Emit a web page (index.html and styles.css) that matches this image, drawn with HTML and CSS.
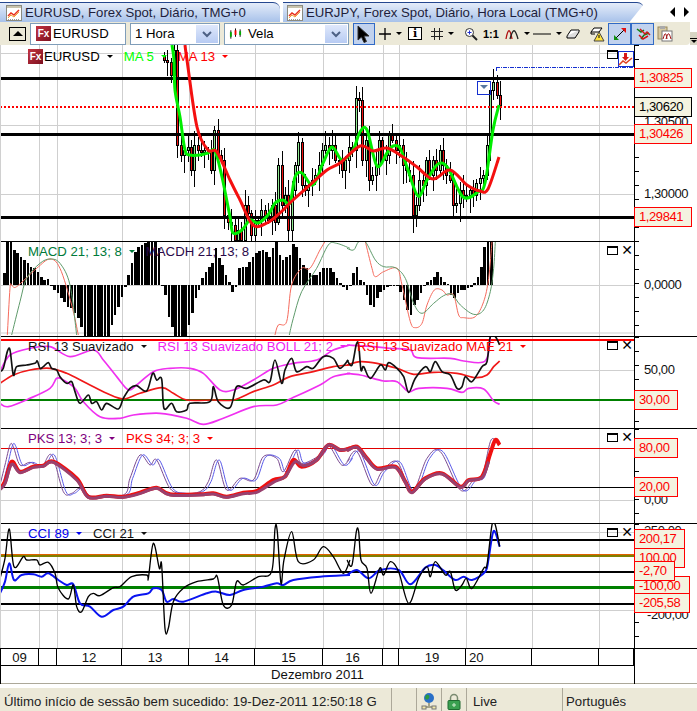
FILE: index.html
```html
<!DOCTYPE html>
<html lang="pt-br">
<head>
    <meta charset="UTF-8">
    <title>EURUSD, Forex Spot</title>
    <link rel="stylesheet" href="styles.css">
</head>
<body>

    <!-- Abas -->
    <div class="tabs">
        <div class="tab tab-first">
            <svg class="tab-icon" viewBox="0 0 16 16"><rect x=".5" y=".5" width="15" height="15" fill="#fff" stroke="#8a8a80"/><rect x="1" y="1" width="14" height="2" fill="#c9c4ae"/><path d="M2 11l3-3 3 2 5-5" fill="none" stroke="#e8301c" stroke-width="1.5"/><path d="M2 13l3-3 3 2 5-5" fill="none" stroke="#f0a030"/><path d="M2 14.500h12" stroke="#999" stroke-dasharray="1 1"/></svg>
            EURUSD, Forex Spot, Diário, TMG+0
        </div>
        <div class="tab tab-second">
            <svg class="tab-icon" viewBox="0 0 16 16"><rect x=".5" y=".5" width="15" height="15" fill="#fff" stroke="#8a8a80"/><rect x="1" y="1" width="14" height="2" fill="#c9c4ae"/><path d="M2 11l3-3 3 2 5-5" fill="none" stroke="#e8301c" stroke-width="1.5"/><path d="M2 13l3-3 3 2 5-5" fill="none" stroke="#f0a030"/><path d="M2 14.500h12" stroke="#999" stroke-dasharray="1 1"/></svg>
            EURJPY, Forex Spot, Diário, Hora Local (TMG+0)
        </div>
        <div class="tab-rest">
            <svg class="tab-icon" viewBox="0 0 16 16"><rect x=".5" y=".5" width="15" height="15" fill="#fff" stroke="#8a8a80"/><rect x="1" y="1" width="14" height="2" fill="#c9c4ae"/><path d="M2 11l3-3 3 2 5-5" fill="none" stroke="#e8301c" stroke-width="1.5"/><path d="M2 13l3-3 3 2 5-5" fill="none" stroke="#f0a030"/><path d="M2 14.500h12" stroke="#999" stroke-dasharray="1 1"/></svg>
        </div>
        <div class="tab-arrows"><i class="arrow-left"></i><i class="arrow-right"></i></div>
    </div>

    <!-- Barra de ferramentas -->
    <div class="toolbar-row">
    <div class="toolbar">
        <button class="collapse-btn"><i></i></button>
        <div class="combo combo-symbol"><span class="fx">Fx</span>EURUSD</div>
        <div class="combo combo-period">1 Hora<span class="combo-btn"><svg viewBox="0 0 10 8"><path d="M1 2l4 4 4-4" fill="none" stroke="#4d6185" stroke-width="2"/></svg></span></div>
        <div class="combo combo-type">
            <svg class="candle-icon" viewBox="0 0 14 12"><path d="M2 2v9M7 0v9M12 1v8" stroke="#000"/><rect x="1" y="4" width="2" height="5" fill="#0a0"/><rect x="6" y="2" width="2" height="5" fill="#e00"/><rect x="11" y="3" width="2" height="4" fill="#0a0"/></svg>
            Vela<span class="combo-btn"><svg viewBox="0 0 10 8"><path d="M1 2l4 4 4-4" fill="none" stroke="#4d6185" stroke-width="2"/></svg></span>
        </div>
        <div class="tools">
            <span class="tool on tool-pointer"><svg width="14" height="18" viewBox="0 0 14 18"><path d="M1 1v14l3.500-3 2.500 5.500 2.500-1-2.500-5.500H12z" fill="#000" stroke="#333"/></svg></span>
            <span class="tool tool-cross"><svg width="12" height="12" viewBox="0 0 12 12"><path d="M6 0v12M0 6h12" stroke="#000" stroke-width="1.300"/></svg><i class="caret"></i></span>
            <span class="tool tool-info">i</span>
            <span class="tool tool-grid"><svg width="12" height="12" viewBox="0 0 12 12"><path d="M3.500 0v12M8.500 0v12M0 3.500h12M0 8.500h12" stroke="#222"/></svg><i class="caret"></i></span>
            <span class="tool tool-zoom"><svg width="14" height="14" viewBox="0 0 14 14"><circle cx="5.500" cy="5.500" r="4" fill="#fff" stroke="#333"/><path d="M3.500 5.500h4M5.500 3.500v4" stroke="#2030d0"/><path d="M8.500 8.500l4.500 4.500" stroke="#222" stroke-width="2"/></svg></span>
            <span class="tool tool-ratio">1:1</span>
            <span class="tool tool-wave"><svg width="14" height="14" viewBox="0 0 14 14"><path d="M1 12C3 1 5 1 7 12" fill="none" stroke="#b01010" stroke-width="1.300"/><path d="M5 12C8 1 10 1 13 12" fill="none" stroke="#222" stroke-width="1.300"/></svg><i class="caret"></i></span>
            <span class="tool tool-line"><svg width="18" height="4" viewBox="0 0 18 4"><path d="M0 2h18" stroke="#000"/></svg><i class="caret"></i></span>
            <span class="tool tool-eraser"><svg width="14" height="12" viewBox="0 0 14 12"><path d="M1 8l4-6h8l-4 6z" fill="#fff" stroke="#000"/><path d="M1 8v2h8l4-6V2" fill="#ddd" stroke="#000"/></svg></span>
            <span class="tool tool-alert"><svg width="15" height="16" viewBox="0 0 15 16"><path d="M1 6l3-4h8l-3 4z" fill="#fff" stroke="#000"/><path d="M1 6v2h4" fill="none" stroke="#000"/><path d="M9 6l5 9H4z" fill="#ffe23c" stroke="#444"/><path d="M9 9v3" stroke="#000"/></svg></span>
            <span class="tool on tool-pair"><svg width="16" height="16" viewBox="0 0 16 16"><path d="M3 13L13 3" stroke="#000"/><path d="M9 2h5v5z" fill="#e01010"/><path d="M2 9v5h5z" fill="#109010"/></svg></span>
            <span class="tool on tool-pair"><svg width="16" height="16" viewBox="0 0 16 16"><path d="M2 3l4 3 3-2M6 13l3-4 5-2" fill="none" stroke="#108010" stroke-width="1.500"/><path d="M5 3l5 5 2-2 3 3M4 9l4 4 5-3" fill="none" stroke="#d01818" stroke-width="1.500"/></svg></span>
            <span class="tool tool-clip"><svg width="16" height="17" viewBox="0 0 16 17"><rect x="1" y="2" width="9" height="12" fill="#d8c9a0" stroke="#98885c"/><rect x="3" y="1" width="5" height="3" fill="#aaa"/><rect x="5" y="6" width="10" height="10" fill="#fff" stroke="#777"/><path d="M6 14c2-7 3-7 4 0M9 14c2-7 3-7 5 0" fill="none" stroke="#a01010"/></svg></span>
        </div>
    </div>
    <span class="toolbar-end"><i></i></span>
    </div>

    <!-- Painel de preço -->
    <div class="panel panel-price">
        <div class="plot">
            <svg width="634" height="196" viewBox="0 45 634 196">
                <path id="vgrid" class="grid" d="M39.500 45V648M57.500 45V648M122.500 45V648M189.500 45V648M255.500 45V648M323.500 45V648M383.500 45V648M399.500 45V648M466.500 45V648M532.500 45V648M599.500 45V648"/>
                <path class="grid" d="M0 53.500H634M0 125.500H634M0 194.500H634"/>
                <g id="candles"></g>
                <path class="level" d="M0 78.500H634M0 134.500H634M0 217.500H634"/>
                <path class="last-price" d="M0 107H634"/>
                <path class="target-line" d="M496.500 67V71M496 67.500H634"/>
                <polyline class="ma ma-fast" points="172,45 174,60 175,90 180,117 185,150 190,155 200,155 208,153 215,151 222,177 230,217 233,233 242,230 250,220 258,223 268,215 275,203 283,200 290,203 295,177 302,173 313,185 323,163 332,147 342,160 353,150 360,132 367,130 377,166 387,153 393,146 400,148 407,167 418,196 427,180 438,164 448,168 463,197 478,192 485,183 493,130 499,105"/>
                <polyline class="ma ma-slow" points="185,45 187,60 197,127 208,150 217,152 230,180 240,200 253,225 267,223 280,213 293,200 310,185 327,170 340,163 360,146 373,151 387,148 403,157 417,167 433,179 450,170 467,185 480,191 488,189 499,157"/>
                <rect class="marker" x="477.500" y="81.500" width="13" height="13"/>
                <path d="M480 85h8l-4 4z" fill="#5878a0"/>
            </svg>
            <div class="legend">
                <span class="fx">Fx</span>
                <span class="item item-symbol">EURUSD<i class="caret"></i></span>
                <span class="item lime">MA 5<i class="caret"></i></span>
                <span class="item red">MA 13<i class="caret"></i></span>
            </div>
            <span class="pane-max"></span>
            <svg class="pane-alert" viewBox="0 0 16 16"><rect x=".5" y=".5" width="15" height="15" fill="#fff" stroke="#1530d0"/><path d="M6 2h3v4h2l-3.500 4L4 6h2z" fill="#d81818"/><path d="M1 14l4-4 3 2 6-5" fill="none" stroke="#e04020" stroke-width="1.500"/></svg>
        </div>
        <div class="axis">
            <span class="price-label red-box">1,30825</span>
            <span class="axis-text axis-13050">1,30500</span>
            <span class="price-label black-box">1,30620</span>
            <span class="price-label red-box label-30426">1,30426</span>
            <span class="axis-text axis-13000">1,30000</span>
            <span class="price-label red-box label-29841">1,29841</span>
        </div>
    </div>

    <!-- MACD -->
    <div class="panel panel-macd">
        <div class="plot">
            <svg width="634" height="95" viewBox="0 241 634 95">
                <use href="#vgrid"/>
                <path class="grid" d="M0 285.500H634M0 333H634"/>
                <g id="macd-bars"></g>
                <g transform="translate(0 235) scale(.3333)">
                    <polyline class="macd-fast" points="22,300 30,160 35,150 50,155 110,100 150,72 180,100 215,210 235,300"/>
                    <polyline class="macd-fast" points="825,300 835,270 860,260 875,150 905,100 930,100 960,45 975,20"/>
                    <polyline class="macd-slow" points="35,300 60,200 80,130 120,85 150,72 180,85 210,150 230,300"/>
                    <polyline class="macd-slow" points="868,300 880,250 905,170 950,100 985,30 1010,25 1050,40"/>
                </g>
                <g transform="translate(347 235) scale(.3333)">
                    <polyline class="macd-fast" points="55,20 75,100 85,125 110,110 150,100 165,150 190,260 205,278 225,265 240,210 262,165 285,165 300,180 320,180 335,240 350,248 385,245 410,200 425,130 435,20"/>
                    <polyline class="macd-slow" points="0,40 20,45 35,20 55,20 85,75 110,95 145,98 175,130 200,205 225,235 260,205 290,182 315,178 340,210 380,238 410,225 430,170 440,100 445,20"/>
                </g>
                <path class="panel-top" d="M0 241.500H634"/>
            </svg>
            <div class="legend">
                <span class="item green">MACD 21; 13; 8<i class="caret"></i></span>
                <span class="item item-deep">MACDH 21; 13; 8</span>
            </div>
            <span class="pane-max"></span><span class="pane-close">✕</span>
        </div>
        <div class="axis"><span class="axis-text axis-macd">0,0000</span></div>
    </div>

    <!-- RSI -->
    <div class="panel panel-rsi">
        <div class="plot">
            <svg width="634" height="92" viewBox="0 336 634 92">
                <use href="#vgrid"/>
                <path class="grid" d="M0 370.500H634"/>
                <path class="rsi-top" d="M0 340H634"/>
                <path class="rsi-low" d="M0 400H634"/>
                <g transform="translate(0 235) scale(.3333)">
                    <polyline class="boll" points="0,410 30,360 90,340 150,335 210,365 280,345 310,375 350,425 385,465 410,450 460,410 510,400 570,400 610,415 660,465 700,465 760,435 820,400 880,385 950,375 1000,345 1050,330"/>
                    <polyline class="boll" points="0,505 25,515 90,490 150,460 170,430 190,435 225,460 250,500 300,545 360,550 400,540 480,535 560,550 610,568 670,550 760,515 830,510 875,490 960,450 1000,425 1050,415"/>
                    <polyline class="mae" points="0,445 40,420 90,405 150,400 200,415 260,445 320,475 370,492 420,475 485,458 520,475 560,495 640,495 700,495 760,470 820,450 870,425 940,410 1000,395 1050,390"/>
                    <polyline class="rsi" points="0,410 10,400 22,350 30,345 40,420 50,395 80,390 105,385 112,378 120,400 130,395 145,383 155,400 170,405 180,425 200,445 215,440 225,470 240,505 265,480 275,505 290,500 305,525 320,505 355,522 370,490 390,460 410,452 440,468 458,415 470,435 485,432 492,520 515,505 530,530 560,525 570,505 630,500 640,455 655,500 690,518 710,455 740,460 790,435 810,440 825,375 845,445 855,405 875,370 890,410 920,395 940,400 970,365 1000,370 1020,400 1045,375"/>
                </g>
                <g transform="translate(347 235) scale(.3333)">
                    <polyline class="boll" points="0,330 80,335 130,340 190,345 210,368 310,370 350,378 415,378 430,305"/>
                    <polyline class="boll" points="0,415 40,420 60,425 110,438 150,440 185,470 215,460 300,460 345,472 365,460 410,462 440,498 458,508"/>
                    <polyline class="mae" points="0,390 40,380 90,385 150,400 200,418 260,412 330,415 385,428 420,420 440,395 458,378"/>
                    <polyline class="rsi" points="0,375 15,390 28,328 35,330 42,405 50,395 70,430 100,390 115,405 125,383 150,400 170,425 185,472 205,430 235,395 250,410 265,380 285,410 310,420 330,460 345,455 355,425 375,440 405,395 420,380 430,305 445,305 458,330"/>
                </g>
                <path class="panel-top" d="M0 336.500H634"/>
            </svg>
            <div class="legend">
                <span class="item item-dark">RSI 13 Suavizado<i class="caret"></i></span>
                <span class="item magenta">RSI 13 Suavizado BOLL 21; 2<i class="caret"></i></span>
                <span class="item red">RSI 13 Suavizado MAE 21<i class="caret"></i></span>
            </div>
            <span class="pane-max"></span><span class="pane-close">✕</span>
        </div>
        <div class="axis axis-ruled">
            <span class="axis-text axis-50">50,00</span>
            <span class="price-label red-box label-30">30,00</span>
        </div>
    </div>

    <!-- PKS -->
    <div class="panel panel-pks">
        <div class="plot">
            <svg width="634" height="95" viewBox="0 428 634 95">
                <use href="#vgrid"/>
                <path class="grid" d="M0 500.500H634"/>
                <path class="pks-top" d="M0 448.500H634"/>
                <path class="pks-low" d="M0 487.500H634"/>
                <g transform="translate(0 425) scale(.3333)">
                    <polyline class="pks-thin-a" points="0,180 15,120 30,60 40,65 60,120 90,112 125,125 155,90 190,200 215,205 240,190 270,215 370,210 390,160 420,90 450,120 470,105 510,190 550,205 600,200 625,170 650,105 680,195 720,160 760,165 790,95 830,100 850,140 885,75 905,115 960,90 985,60 1025,120 1050,100"/>
                    <polyline class="pks-thin-b" points="8,180 23,120 38,60 48,65 68,120 98,112 133,125 163,90 198,200 223,205 248,190 278,215 378,210 398,160 428,90 458,120 478,105 518,190 558,205 608,200 633,170 658,105 688,195 728,160 768,165 798,95 838,100 858,140 893,75 913,115 968,90 993,60 1033,120 1058,100"/>
                    <polyline class="pks-red" points="0,190 15,170 35,110 60,140 100,125 130,122 160,110 230,160 265,215 320,212 370,215 420,203 470,188 510,208 600,208 640,205 680,215 730,203 770,198 820,165 855,155 880,105 905,125 950,105 985,60 1020,75 1050,70"/>
                    <polyline class="pks-purple" points="0,194 15,176 35,118 60,143 100,127 130,124 160,112 230,165 265,217 320,214 370,217 420,206 470,190 510,210 600,210 640,207 680,217 730,206 770,202 820,172 855,155 885,110 910,122 950,105 985,60 1020,75 1050,70"/>
                </g>
                <g transform="translate(347 425) scale(.3333)">
                    <polyline class="pks-thin-a" points="0,110 30,80 75,180 105,140 150,110 195,200 240,100 280,80 340,195 380,165 405,155 430,50 445,45"/>
                    <polyline class="pks-thin-b" points="8,110 38,80 83,180 113,140 158,110 203,200 248,100 288,80 348,195 388,165 413,155 438,60 448,48"/>
                    <polyline class="pks-red" points="0,75 30,65 60,100 90,130 145,125 175,170 195,200 235,160 285,145 340,185 365,165 405,155 430,85 445,45 458,60"/>
                    <polyline class="pks-purple" points="0,77 30,67 60,102 90,133 145,127 175,172 195,203 235,162 285,147 340,187 365,167 405,158 425,110"/>
                </g>
                <path class="panel-top" d="M0 428.500H634"/>
            </svg>
            <div class="legend">
                <span class="item purple">PKS 13; 3; 3<i class="caret"></i></span>
                <span class="item red">PKS 34; 3; 3<i class="caret"></i></span>
            </div>
            <span class="pane-max"></span><span class="pane-close">✕</span>
        </div>
        <div class="axis axis-ruled">
            <span class="axis-text axis-0">0,00</span>
            <span class="price-label red-box label-80">80,00</span>
            <span class="price-label red-box label-20">20,00</span>
        </div>
    </div>

    <!-- CCI -->
    <div class="panel panel-cci">
        <div class="plot">
            <svg width="634" height="125" viewBox="0 523 634 125">
                <use href="#vgrid"/>
                <path class="grid" d="M0 532.500H634M0 610.500H634"/>
                <path class="cci-line" d="M0 540H634M0 572H634M0 604H634"/>
                <path class="cci-orange" d="M0 554.500H634"/>
                <path class="cci-olive" d="M0 556H634"/>
                <path class="cci-green" d="M0 587.500H634"/>
                <g transform="translate(0 425) scale(.3333)">
                    <polyline class="cci-89" points="0,505 15,470 28,415 42,465 65,450 100,448 125,455 145,445 175,465 200,480 220,478 240,535 270,545 305,575 340,555 370,545 400,515 445,505 460,490 485,495 500,530 520,522 550,530 620,505 650,500 690,510 730,495 790,485 830,475 850,480 880,465 960,455 1050,450"/>
                    <polyline class="cci-21" points="0,460 15,400 28,312 42,425 70,395 80,405 110,405 120,420 145,412 165,445 175,490 205,522 220,480 230,545 245,560 265,515 280,505 300,512 340,488 360,485 395,455 440,450 445,460 460,355 478,430 485,420 495,610 505,610 520,530 550,490 590,470 640,462 652,455 670,540 695,540 710,470 730,480 775,455 815,440 825,312 832,320 843,475 852,405 875,320 895,410 940,405 970,365 1000,395 1030,445 1050,405"/>
                </g>
                <g transform="translate(347 425) scale(.3333)">
                    <polyline class="cci-89" points="0,450 30,435 65,460 100,435 155,435 190,478 235,428 265,420 290,437 325,465 350,455 375,465 415,440 425,400 440,318 458,365"/>
                    <polyline class="cci-21" points="0,405 15,420 28,320 35,320 42,405 60,430 72,505 98,430 110,450 130,410 155,440 185,535 215,460 240,425 250,455 265,410 295,450 310,440 325,495 345,480 358,460 375,490 410,430 420,420 435,300 445,300 458,365"/>
                </g>
                <path class="panel-top" d="M0 523.500H634"/>
            </svg>
            <div class="legend">
                <span class="item blue">CCI 89<i class="caret"></i></span>
                <span class="item item-dark">CCI 21<i class="caret"></i></span>
            </div>
            <span class="pane-max"></span><span class="pane-close">✕</span>
        </div>
        <div class="axis axis-ruled">
            <span class="axis-text axis-250">250,00</span>
            <span class="axis-text axis-m200">-200,00</span>
            <span class="price-label red-box label-100">100,00</span>
            <span class="price-label red-box label-200">200,17</span>
            <span class="price-label red-box label-m100">-100,00</span>
            <span class="price-label red-box label-m2">-2,70</span>
            <span class="price-label red-box label-m205">-205,58</span>
        </div>
    </div>

    <!-- Eixo de tempo -->
    <div class="time-axis">
        <div class="days">
            <span>09</span><span></span><span>12</span><span>13</span><span>14</span><span>15</span><span>16</span><span></span><span>19</span><span class="day-left">20</span><span></span><span></span>
        </div>
        <div class="month">Dezembro 2011</div>
    </div>

    <!-- Barra de status -->
    <div class="status">
        <span class="status-cell status-msg">Último início de sessão bem sucedido: 19-Dez-2011 12:50:18 G</span>
        <span class="status-cell status-icon"></span>
        <span class="status-cell status-icon"><svg width="16" height="18" viewBox="0 0 16 18"><circle cx="8" cy="6" r="5" fill="#2a70c8"/><path d="M5 3c3-1 4 1 3 3s-3 2-4 0" fill="#2c9a40"/><path d="M8 11v3M2 15h12" stroke="#8a8a70" stroke-width="1.500"/><rect x="1" y="14" width="4" height="3" fill="#f3e9a8" stroke="#777"/><rect x="11" y="14" width="4" height="3" fill="#f3e9a8" stroke="#777"/></svg></span>
        <span class="status-cell status-icon"><svg width="14" height="17" viewBox="0 0 14 17"><path d="M3.500 8V5a3.500 3.500 0 0 1 7 0v3" fill="none" stroke="#7a8a70" stroke-width="1.500"/><rect x="1" y="7.500" width="12" height="9" rx="1" fill="#3aa050" stroke="#1f6a30"/><path d="M7 10v4M5 12h4" stroke="#cfeccf"/></svg></span>
        <span class="status-cell status-live">Live</span>
        <span class="status-cell status-lang">Português</span>
    </div>

    <script src="chart.js"></script>
</body>
</html>
```

FILE: styles.css
```css
body, html {
    margin: 0;
    padding: 0;
    background: #fff;
    font-family: "Liberation Sans", Arial, sans-serif;
    font-size: 13.2px;
    overflow: hidden;
}

/* Abas */
.tabs {
    display: flex;
    height: 22px;
    padding-top: 2px;
    box-sizing: border-box;
    position: relative;
}

.tab {
    display: flex;
    align-items: center;
    gap: 3px;
    padding-left: 6px;
    color: #1e1e3c;
    background: linear-gradient(#e4ecf9, #a8c2ea);
    border-top: 1px solid #24478f;
    border-radius: 0 7px 0 0;
    box-sizing: border-box;
    white-space: nowrap;
}

.tab-first {
    width: 280px;
    margin-right: 3px;
}

.tab-second {
    width: 361px;
    padding-left: 4px;
    clip-path: polygon(0 0, 100% 0, 100% 10%, 96% 100%, 0 100%);
}

.tab-icon {
    width: 16px;
    height: 16px;
    flex: none;
}

.tab-rest {
    display: flex;
    align-items: center;
    width: 36px;
    margin-left: -14px;
    padding-left: 21px;
    box-sizing: border-box;
    background: #fbe6c8;
    position: relative;
    z-index: -1;
}

.tab-arrows {
    display: flex;
    align-items: center;
    gap: 9px;
    padding-left: 4px;
}

.arrow-left {
    border: 5px solid transparent;
    border-left-width: 0;
    border-right: 5px solid #000;
}

.arrow-right {
    border: 5px solid transparent;
    border-right-width: 0;
    border-left: 5px solid #000;
}

/* Barra de ferramentas */
.toolbar-row {
    display: flex;
    height: 23px;
}

.toolbar {
    display: flex;
    align-items: center;
    width: 690px;
    height: 23px;
    box-sizing: border-box;
    padding-left: 9px;
    background: #ece9d8;
    border-radius: 0 0 4px 0;
}

.toolbar-end {
    display: flex;
    flex-direction: column;
    align-items: center;
    justify-content: flex-end;
    gap: 1px;
    width: 7px;
    padding-bottom: 2px;
    box-sizing: border-box;
    background: linear-gradient(#fff 45%, #d8d5c4 45%);
}

.toolbar-end::before {
    content: "";
    width: 7px;
    height: 1px;
    background: #000;
}

.toolbar-end i {
    border: 3px solid transparent;
    border-top: 3px solid #000;
    border-bottom-width: 0;
}

.collapse-btn {
    width: 17px;
    height: 14px;
    margin-right: 4px;
    padding: 0;
    border: 1px solid #000;
    background: #ece9d8;
    display: flex;
    align-items: center;
    justify-content: center;
}

.collapse-btn i {
    border: 5px solid transparent;
    border-top-width: 0;
    border-bottom: 5px solid #000;
}

.combo {
    display: flex;
    align-items: center;
    height: 22px;
    margin-right: 4px;
    box-sizing: border-box;
    background: #fff;
    border: 1px solid #7f9db9;
    color: #000;
    position: relative;
}

.combo-symbol {
    width: 96px;
    padding-left: 5px;
}

.combo-symbol .fx {
    margin-right: 2px;
}

.combo-period {
    width: 90px;
    padding-left: 4px;
}

.combo-type {
    width: 125px;
    padding-left: 4px;
}

.combo-btn {
    position: absolute;
    right: 1px;
    top: 1px;
    bottom: 1px;
    width: 22px;
    display: flex;
    align-items: center;
    justify-content: center;
    background: linear-gradient(#dfe8fb, #b7cbf3);
}

.combo-btn svg {
    width: 10px;
    height: 8px;
}

.candle-icon {
    width: 13px;
    height: 12px;
    margin-right: 6px;
}

.fx {
    display: inline-block;
    width: 15px;
    height: 15px;
    flex: none;
    background: linear-gradient(135deg, #c43340, #7c1020);
    color: #fff;
    font-size: 10px;
    font-weight: bold;
    line-height: 15px;
    text-align: center;
}

.tools {
    display: flex;
    align-items: center;
    height: 22px;
}

.tool {
    display: flex;
    align-items: center;
    height: 22px;
    box-sizing: border-box;
    flex: none;
}

.tool.on {
    background: #c1d2ee;
    border: 1px solid #316ac5;
    justify-content: center;
}

.tool .caret {
    margin-left: 5px;
}

.tool-pointer { width: 22px; margin-right: 4px; }
.tool-cross { width: 29px; }
.tool-info {
    width: 14px;
    height: 13px;
    margin-right: 9px;
    border: 1.5px solid #000;
    justify-content: center;
    font-family: "DejaVu Serif", serif;
    font-size: 11px;
    font-weight: bold;
    background: #fff;
}
.tool-grid { width: 33px; }
.tool-zoom { width: 19px; }
.tool-ratio { width: 22px; font-size: 11px; font-weight: bold; }
.tool-wave { width: 28px; }
.tool-line { width: 33px; }
.tool-eraser { width: 24px; }
.tool-alert { width: 18px; }
.tool-pair { width: 23px; }
.tool-clip { width: 20px; padding-left: 3px; }

/* Painéis */
.panel {
    display: flex;
}

.panel-price { height: 196px; }
.panel-macd { height: 95px; }
.panel-rsi { height: 92px; }
.panel-pks { height: 95px; }
.panel-cci { height: 125px; }

.plot {
    position: relative;
    width: 634px;
    height: 100%;
    flex: none;
    overflow: hidden;
    border-left: 1px solid #d0d0d0;
    box-sizing: border-box;
}

.plot svg {
    display: block;
    margin-left: -1px;
    fill: none;
}

.axis {
    position: relative;
    flex: 1;
    box-sizing: border-box;
    border-left: 1px solid #000;
    background: repeating-linear-gradient(#000 0 1px, transparent 1px 14px) no-repeat 0 0 / 4px 100%;
    font-size: 13px;
    letter-spacing: -.4px;
}

.axis-ruled {
    border-top: 1px solid #000;
}

.grid { stroke: #cfcfcf; stroke-width: 1; }
.level { stroke: #000; stroke-width: 3; }
.last-price { stroke: #f00; stroke-width: 2; stroke-dasharray: 2 2; }
.target-line { stroke: #1530d0; stroke-dasharray: 4 1 1 1; }
.ma { stroke-width: 3; fill: none; stroke-linejoin: round; }
.ma-fast { stroke: #00ee00; }
.ma-slow { stroke: #f41010; }
.marker { stroke: #1530d0; stroke-width: 1; }
.panel-top { stroke: #000; stroke-width: 1; }

#candles, #macd-bars { shape-rendering: crispEdges; }

.macd-fast { stroke: #f56a5c; stroke-width: 3; fill: none; }
.macd-slow { stroke: #5e9a6a; stroke-width: 3; fill: none; }

.rsi-top { stroke: #f00; stroke-width: 2; }
.rsi-low { stroke: #008000; stroke-width: 2; }
.boll { stroke: #f030f0; stroke-width: 5; fill: none; }
.mae { stroke: #f01818; stroke-width: 5; fill: none; }
.rsi { stroke: #111; stroke-width: 5; fill: none; }

.pks-top { stroke: #e00000; stroke-width: 1; }
.pks-low { stroke: #000; stroke-width: 1; }
.pks-thin-a { stroke: #7a4a90; stroke-width: 3; fill: none; }
.pks-thin-b { stroke: #5a5ae8; stroke-width: 3; fill: none; }
.pks-red { stroke: #f01010; stroke-width: 12; fill: none; stroke-linejoin: round; }
.pks-purple { stroke: #99406e; stroke-width: 9; fill: none; stroke-linejoin: round; }

.cci-line { stroke: #000; stroke-width: 2; }
.cci-orange { stroke: #e06000; stroke-width: 1; }
.cci-olive { stroke: #808000; stroke-width: 2; }
.cci-green { stroke: #008000; stroke-width: 3; }
.cci-89 { stroke: #0a14f0; stroke-width: 6; fill: none; }
.cci-21 { stroke: #000; stroke-width: 4; fill: none; }

/* Legendas */
.legend {
    position: absolute;
    left: 27px;
    top: 2px;
    display: flex;
    align-items: center;
    white-space: nowrap;
    height: 16px;
}

.panel-price .legend { top: 3px; }

.item {
    display: flex;
    align-items: center;
    margin-right: 11px;
}

.item-symbol { color: #000; margin-left: 1px; }
.item-dark { color: #111; }
.item-deep { color: #2a0a4a; }
.lime { color: #00ff00; }
.green { color: #007a3a; }
.red { color: #f00; }
.magenta { color: #f020f0; }
.purple { color: #800080; }
.blue { color: #0000f0; }

.caret {
    display: inline-block;
    margin-left: 7px;
    border: 3px solid transparent;
    border-bottom-width: 0;
    border-top: 3px solid currentColor;
}

.pane-max {
    position: absolute;
    right: 16px;
    top: 5px;
    width: 9px;
    height: 6px;
    border: 1px solid #000;
    border-top-width: 2px;
}

.pane-close {
    position: absolute;
    right: 1px;
    top: 1px;
    font-size: 14px;
    line-height: 16px;
    font-weight: bold;
    font-family: "DejaVu Sans", sans-serif;
    color: #000;
}

.pane-alert {
    position: absolute;
    width: 16px;
    height: 16px;
    left: 618px;
    top: 6px;
}

/* Rótulos do eixo */
.axis-text {
    position: absolute;
    left: 9px;
    color: #111;
    line-height: 16px;
}

.price-label {
    position: absolute;
    left: -1px;
    height: 20px;
    box-sizing: border-box;
    padding: 0 4px;
    line-height: 18px;
    background: #f4f3e0;
    border: 1px solid #f00;
    white-space: nowrap;
    color: #f00;
}

.red-box { color: #f00; border-color: #f00; }
.black-box { color: #000; border-color: #000; }

.panel-price .price-label { width: 58px; }
.panel-price .red-box { top: 23px; }
.panel-price .black-box { top: 52px; }
.panel-price .label-30426 { top: 79px; }
.panel-price .label-29841 { top: 162px; }
.axis-13050 { top: 69px; }
.axis-13000 { top: 141px; }

.axis-macd { top: 36px; }
.axis-50 { top: 25px; }
.panel-rsi .label-30 { top: 53px; width: 44px; }

.panel-pks .label-80 { top: 9px; width: 44px; }
.panel-pks .label-20 { top: 48px; width: 44px; }
.axis-0 { top: 63px; }

.axis-250 { top: -1px; }
.axis-m200 { top: 83px; left: 12px; }
.panel-cci .label-200 { top: 5px; width: 51px; }
.panel-cci .label-100 { top: 24px; width: 51px; }
.panel-cci .label-m2 { top: 37px; width: 41px; }
.panel-cci .label-m100 { top: 52px; width: 56px; }
.panel-cci .label-m205 { top: 69px; width: 56px; }

/* Eixo de tempo */
.time-axis {
    position: relative;
    width: 635px;
    border-right: 1px solid #000;
    box-sizing: border-box;
    border-left: 1px solid #000;
}

.time-axis::before {
    content: "";
    position: absolute;
    left: 0;
    top: 0;
    width: 697px;
    height: 1px;
    background: #000;
}

.days {
    display: grid;
    grid-template-columns: 38px 18px 65px 67px 66px 68px 60px 16px 67px 66px 67px 35px;
    height: 18px;
    box-sizing: border-box;
    border-top: 1px solid #000;
    border-bottom: 1px solid #000;
}

.days span {
    border-right: 1px solid #000;
    text-align: center;
    line-height: 17px;
    color: #111;
}

.days .day-left {
    text-align: left;
    padding-left: 3px;
}

.month {
    height: 18px;
    line-height: 18px;
    text-align: center;
    color: #111;
}

/* Barra de status */
.status {
    display: flex;
    height: 23px;
    margin-top: 4px;
    background: #ece9d8;
    box-shadow: 0 -4px 0 0 #fff, 0 -5px 0 0 #aca899;
    color: #222;
}

.status-cell {
    display: flex;
    align-items: center;
    box-sizing: border-box;
    border-right: 1px solid #aca899;
    overflow: hidden;
    white-space: nowrap;
    padding-top: 3px;
}

.status-msg { width: 392px; padding-left: 4px; }
.status-icon { width: 25px; justify-content: center; }
.status-live { width: 96px; padding-left: 6px; }
.status-lang { padding-left: 3px; border: 0; }
```

FILE: chart.js
```js
const NS = 'http://www.w3.org/2000/svg';
const STEP = 3.36;

// fechamentos em pixels da tela, da esquerda para a direita
const closes = [60, 62, 75, 50, 145, 155, 150, 147, 170, 145, 150, 152, 150, 150, 170, 130, 155, 160, 215, 222,
    225, 240, 230, 240, 205, 213, 235, 220, 220, 210, 215, 220, 205, 222, 165, 205, 195, 230, 190, 165,
    142, 185, 190, 185, 180, 175, 165, 150, 145, 150, 145, 160, 160, 170, 160, 147, 150, 98, 100, 160,
    140, 180, 175, 165, 140, 160, 155, 135, 140, 150, 145, 165, 170, 175, 215, 205, 180, 185, 160, 175,
    160, 170, 150, 165, 175, 180, 205, 203, 190, 195, 195, 190, 195, 183, 178, 175, 145, 90, 82, 95, 105];

const macd = [12, 44, 44, 35, 32, 28, 25, 22, 18, 17, 13, 8, 5, 6, 0, -5, -8, -13, -17, -22, -23, -28, -33, -42, -51, -51, -51, -51, -51, -51, -51, -51, -40, -30, -22, -12, -2, 10, 22, 33, 38, 40, 42, 43, 44, 44, 37, 0, -10, -32, -42, -51, -51, -51, -51, -40, -28, -13, -5, 7, 13, 18, 22, 37, 27, 20, 10, 3, -7, -2, 17, 18, 18, 23, 28, 32, 34, 35, 33, 28, 37, 44, 30, 25, 28, 30, 41, 38, 27, 20, 17, 12, 10, 10, 13, 17, 17, 17, 13, 7, 2, -2, -5, 0,
    12, 18, 5, 3, -10, -20, -22, -13, -7, -5, -2, 0, 0, -1, -7, -15, -25, -30, -20, -15, -8, 0, 3, 5, 8, 13, 8, 3, 1, -10, -13, -8, -5, -5, -3, -2, 2, 8, 18, 38, 44, 44];

function el(name, attrs, parent) {
    const node = document.createElementNS(NS, name);
    for (const key in attrs) {
        node.setAttribute(key, attrs[key]);
    }
    parent.appendChild(node);
    return node;
}

function drawCandles() {
    const group = document.getElementById('candles');
    let open = 55;
    closes.forEach((close, i) => {
        const x = Math.round(163 + i * STEP);
        const top = Math.min(open, close);
        const bottom = Math.max(open, close);
        const wickUp = 3 + (i * 7) % 13;
        const wickDown = 3 + (i * 11) % 17;
        el('path', { d: `M${x + 1.5} ${top - wickUp}V${bottom + wickDown}`, stroke: '#000' }, group);
        el('rect', {
            x: x + 0.5,
            y: top,
            width: 2,
            height: Math.max(bottom - top, 1),
            fill: close > open ? '#f01010' : '#90e890',
            stroke: '#000'
        }, group);
        open = close;
    });
}

function drawMacd() {
    const group = document.getElementById('macd-bars');
    macd.forEach((value, i) => {
        const x = 3 + i * STEP;
        el('rect', {
            x: x,
            y: value > 0 ? 285 - value : 285,
            width: 2.6,
            height: Math.max(Math.abs(value), 1),
            fill: '#000'
        }, group);
    });
}

// troca cada polyline por uma curva suave que passa pelos mesmos pontos
function smoothLines() {
    document.querySelectorAll('polyline').forEach((line) => {
        const pts = line.getAttribute('points').split(' ').map((p) => p.split(',').map(Number));
        let d = `M${pts[0][0]} ${pts[0][1]}`;
        for (let i = 0; i < pts.length - 1; i++) {
            const a = pts[Math.max(i - 1, 0)];
            const b = pts[i];
            const c = pts[i + 1];
            const e = pts[Math.min(i + 2, pts.length - 1)];
            d += `C${b[0] + (c[0] - a[0]) / 6} ${b[1] + (c[1] - a[1]) / 6} ${c[0] - (e[0] - b[0]) / 6} ${c[1] - (e[1] - b[1]) / 6} ${c[0]} ${c[1]}`;
        }
        const path = document.createElementNS(NS, 'path');
        path.setAttribute('class', line.getAttribute('class'));
        path.setAttribute('d', d);
        line.replaceWith(path);
    });
}

drawCandles();
drawMacd();
smoothLines();
```
